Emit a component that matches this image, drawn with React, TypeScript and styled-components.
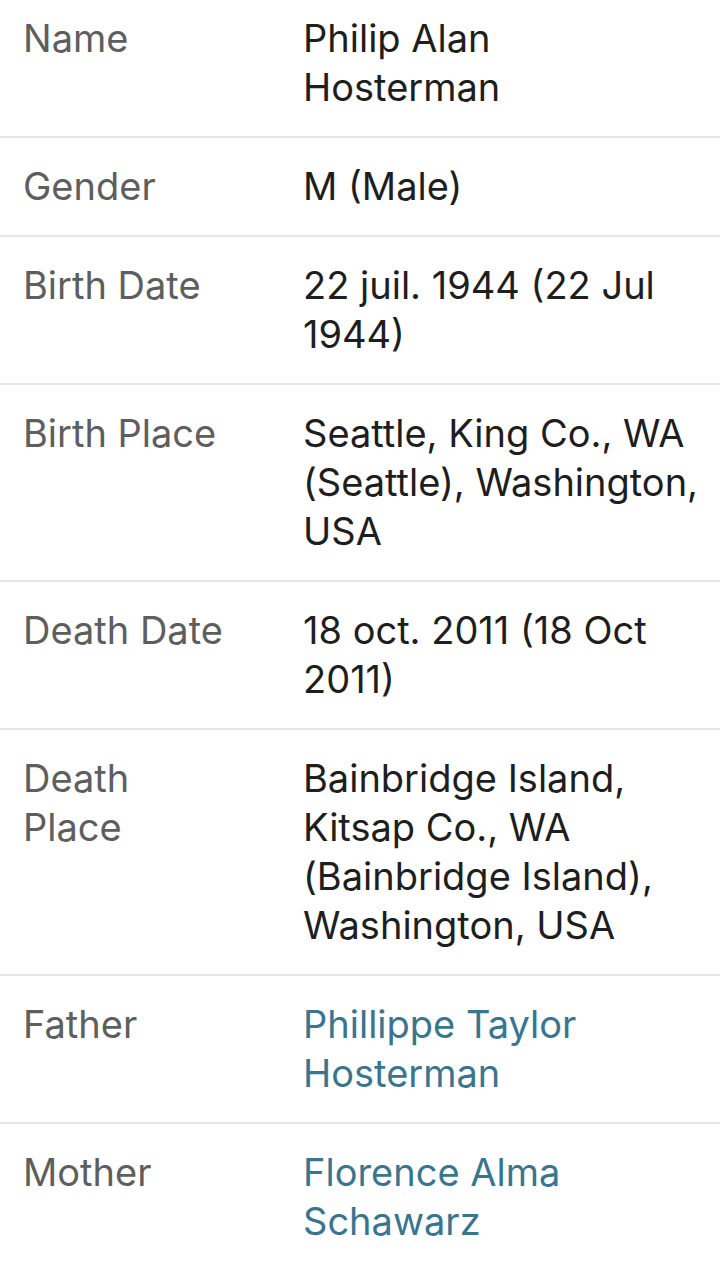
import React from "react";
import styled, { createGlobalStyle } from "styled-components";

const GlobalStyle = createGlobalStyle`
  html, body {
    margin: 0;
    padding: 0;
    background: #ffffff;
  }
  body {
    font-family: Inter, "Liberation Sans", Arial, sans-serif;
    -webkit-font-smoothing: antialiased;
  }
`;

const List = styled.dl`
  margin: 0;
  padding: 0;
  display: flex;
  flex-direction: column;
`;

const Row = styled.div<{ $first?: boolean; $last?: boolean }>`
  display: grid;
  grid-template-columns: 280px 397px;
  padding: ${(p) => (p.$first ? "14px" : "24px")} 0 24px 23px;
  border-bottom: ${(p) => (p.$last ? "none" : "2px solid #e7e7e7")};
`;

const Label = styled.dt`
  margin: 0;
  font-size: 38px;
  line-height: 49px;
  color: #5e5e5e;
`;

const Value = styled.dd<{ $link?: boolean }>`
  margin: 0;
  font-size: 38px;
  line-height: 49px;
  color: ${(p) => (p.$link ? "#3a7590" : "#1e1e1e")};
`;

type Item = { key: string; label: React.ReactNode; value: React.ReactNode; link?: boolean };

const items: Item[] = [
  {
    key: "name",
    label: "Name",
    value: (
      <>
        Philip Alan
        <br />
        Hosterman
      </>
    ),
  },
  { key: "gender", label: "Gender", value: "M (Male)" },
  { key: "bd", label: "Birth Date", value: "22 juil. 1944 (22 Jul 1944)" },
  { key: "bp", label: "Birth Place", value: "Seattle, King Co., WA (Seattle), Washington, USA" },
  { key: "dd", label: "Death Date", value: "18 oct. 2011 (18 Oct 2011)" },
  {
    key: "dp",
    label: (
      <>
        Death
        <br />
        Place
      </>
    ),
    value: "Bainbridge Island, Kitsap Co., WA (Bainbridge Island), Washington, USA",
  },
  { key: "father", label: "Father", value: "Phillippe Taylor Hosterman", link: true },
  { key: "mother", label: "Mother", value: "Florence Alma Schawarz", link: true },
];

export default function App() {
  return (
    <>
      <GlobalStyle />
      <List>
        {items.map((it, i) => (
          <Row key={it.key} $first={i === 0} $last={i === items.length - 1}>
            <Label>{it.label}</Label>
            <Value $link={it.link}>{it.value}</Value>
          </Row>
        ))}
      </List>
    </>
  );
}
